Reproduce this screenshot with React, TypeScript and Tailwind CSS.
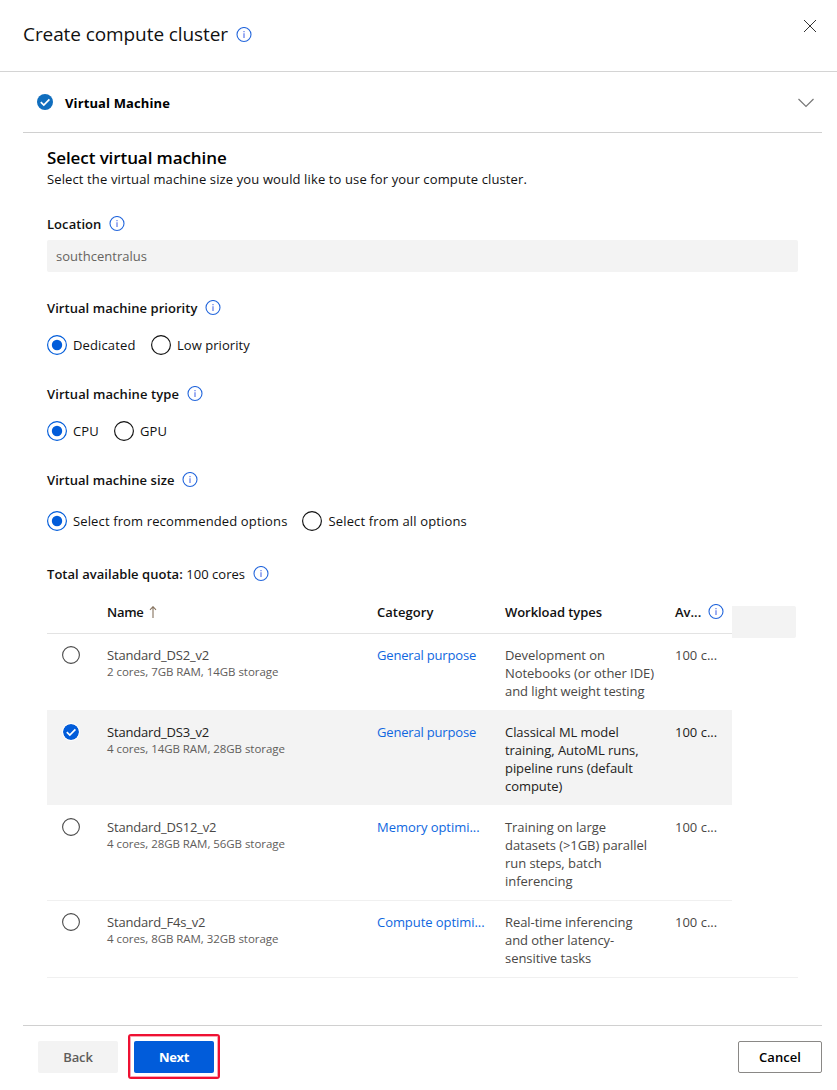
import type { ReactNode } from 'react';

function InfoIcon({ className = '' }: { className?: string }) {
  return (
    <svg viewBox="0 0 16 16" className={`h-4 w-4 shrink-0 ${className}`} fill="none">
      <circle cx="8" cy="7.5" r="7" stroke="#2467dc" strokeWidth="1.1" />
      <path d="M8 6.3V11" stroke="#5c78ea" strokeWidth="1.2" />
      <path d="M8 4V5.2" stroke="#5c78ea" strokeWidth="1.2" />
    </svg>
  );
}

function CheckCircle({ color, className }: { color: string; className: string }) {
  return (
    <svg viewBox="0 0 16 16" className={className} fill="none">
      <circle cx="8" cy="8" r="8" fill={color} />
      <path d="M3.8 8.1L6.8 11L12.4 5.3" stroke="#fff" strokeWidth="1.7" />
    </svg>
  );
}

function Radio({ checked, label, tracking }: { checked?: boolean; label: string; tracking: string }) {
  return (
    <label className="flex h-5 items-center">
      <svg viewBox="0 0 20 20" className="mr-1.5 h-5 w-5 shrink-0" fill="none">
        <circle cx="10" cy="10" r="9.4" stroke={checked ? '#015cda' : '#111111'} strokeWidth="1.15" />
        {checked && <circle cx="10" cy="10" r="5.2" fill="#015cda" />}
      </svg>
      <span className={`pt-0.5 ${tracking}`}>{label}</span>
    </label>
  );
}

function Label({ children, className }: { children: ReactNode; className: string }) {
  return (
    <div className={`flex h-5 items-center gap-[7.6px] whitespace-nowrap ${className}`}>
      <span className="pt-0.5">{children}</span>
      <InfoIcon />
    </div>
  );
}

type Vm = {
  name: string;
  spec: string;
  category: string;
  categoryTracking: string;
  lines: string[];
  selected?: boolean;
};

const machines: Vm[] = [
  {
    name: 'Standard_DS2_v2',
    spec: '2 cores, 7GB RAM, 14GB storage',
    category: 'General purpose',
    categoryTracking: 'tracking-[-0.18px]',
    lines: ['Development on', 'Notebooks (or other IDE)', 'and light weight testing'],
  },
  {
    name: 'Standard_DS3_v2',
    spec: '4 cores, 14GB RAM, 28GB storage',
    category: 'General purpose',
    categoryTracking: 'tracking-[-0.18px]',
    lines: ['Classical ML model', 'training, AutoML runs,', 'pipeline runs (default', 'compute)'],
    selected: true,
  },
  {
    name: 'Standard_DS12_v2',
    spec: '4 cores, 28GB RAM, 56GB storage',
    category: 'Memory optimi...',
    categoryTracking: 'tracking-[-0.05px]',
    lines: ['Training on large', 'datasets (>1GB) parallel', 'run steps, batch', 'inferencing'],
  },
  {
    name: 'Standard_F4s_v2',
    spec: '4 cores, 8GB RAM, 32GB storage',
    category: 'Compute optimi...',
    categoryTracking: 'tracking-[-0.06px]',
    lines: ['Real-time inferencing', 'and other latency-', 'sensitive tasks'],
  },
];

const borders = ['border-[#e3e3e3]', 'border-[#f3f3f3]', 'border-white', 'border-[#f0f0f0]'];

const columns = 'grid grid-cols-[60px_270px_128px_170px_57px] whitespace-nowrap';

function MachineRow({ vm, border }: { vm: Vm; border: string }) {
  const tone = vm.selected ? 'bg-[#f3f3f3] text-[#222120]' : 'text-[#4a4846]';
  return (
    <div className={`${columns} border-t pb-2.5 pt-3 leading-[18px] ${tone} ${border}`}>
      <div className="pl-[15px]">
        {vm.selected ? (
          <CheckCircle color="#015cda" className="ml-px mt-px h-4 w-4 rounded-full ring-1 ring-white" />
        ) : (
          <svg viewBox="0 0 18 18" className="h-[18px] w-[18px]" fill="none">
            <circle cx="9" cy="9" r="8.4" stroke="#4a4a4a" strokeWidth="1.1" />
          </svg>
        )}
      </div>
      <div>
        <div className="tracking-[-0.18px]">{vm.name}</div>
        <div className="text-[11.5px] leading-4 tracking-[-0.05px] text-[#5f5d5b]">{vm.spec}</div>
      </div>
      <div className={`text-[#0f67e0] ${vm.categoryTracking}`}>{vm.category}</div>
      <div className="tracking-[-0.06px]">
        {vm.lines.map((text) => (
          <div key={text}>{text}</div>
        ))}
      </div>
      <div>100 c...</div>
    </div>
  );
}

export default function App() {
  return (
    <div className="flex h-[1090px] w-[837px] flex-col overflow-hidden bg-white font-['Open_Sans','Noto_Sans',sans-serif] text-[13px] text-[#111111]">
      <header className="flex h-[72px] shrink-0 justify-between border-b border-[#d4d4d4] pl-[23px] pr-[21px]">
        <div className="flex h-[68px] items-center gap-[7.6px]">
          <h1 className="text-[19px] tracking-[-0.087px]">Create compute cluster</h1>
          <InfoIcon className="mt-px" />
        </div>
        <svg viewBox="0 0 12 12" className="mt-5 h-3 w-3" fill="none">
          <path d="M0 0L12 12M12 0L0 12" stroke="#333" strokeWidth="1" />
        </svg>
      </header>

      <section className="ml-[23px] mr-[15px] flex h-[61px] shrink-0 items-center border-b border-[#d0d0d0] pl-3.5 pr-2">
        <CheckCircle color="#106ebe" className="h-4 w-4" />
        <h2 className="ml-3 flex-1 pt-[3px] font-bold tracking-[0.118px] text-black">Virtual Machine</h2>
        <svg viewBox="0 0 16 10" className="mt-px h-2.5 w-4" fill="none">
          <path d="M0.5 1L8 8.5L15.5 1" stroke="#777" strokeWidth="1.2" />
        </svg>
      </section>

      <main className="ml-[47px] mr-[39px] flex-1">
        <h3 className="mt-[13px] text-[17px] font-semibold leading-6 tracking-[-0.09px] text-black">Select virtual machine</h3>
        <p className="leading-[18px] tracking-[0.124px]">
          Select the virtual machine size you would like to use for your compute cluster.
        </p>

        <Label className="mt-[26px] font-semibold tracking-[0.06px]">Location</Label>
        <div className="mt-1.5 flex h-8 items-center rounded-[2px] bg-[#f3f3f3] pl-[9px] pt-0.5 tracking-[0.02px] text-[#66635f]">
          southcentralus
        </div>

        <Label className="mt-[26px] font-semibold tracking-[0.05px]">Virtual machine priority</Label>
        <div className="mt-[17px] flex gap-[15.5px]">
          <Radio checked label="Dedicated" tracking="tracking-[0.13px]" />
          <Radio label="Low priority" tracking="tracking-[0.05px]" />
        </div>

        <Label className="mt-[29px] font-semibold tracking-[0.08px]">Virtual machine type</Label>
        <div className="mt-[17px] flex gap-[15px]">
          <Radio checked label="CPU" tracking="tracking-[0.16px]" />
          <Radio label="GPU" tracking="tracking-[0.08px]" />
        </div>

        <Label className="mt-[29px] font-semibold tracking-[0.057px]">Virtual machine size</Label>
        <div className="mt-[21px] flex gap-[15px]">
          <Radio checked label="Select from recommended options" tracking="tracking-[0.13px]" />
          <Radio label="Select from all options" tracking="tracking-[0.15px]" />
        </div>

        <Label className="mt-[33px]">
          <span className="tracking-[0.04px]">
            <span className="font-semibold">Total available quota:</span> 100 cores
          </span>
        </Label>

        <div className="mt-[7px] flex items-start">
          <div className="w-[685px]">
            <div className={`${columns} h-[42px] items-center pt-0.5 font-semibold`}>
              <span />
              <span className="flex items-center">
                <span className="tracking-[-0.28px]">Name</span>
                <svg viewBox="0 0 8 12" className="-mt-0.5 ml-[5px] h-3 w-2" fill="none">
                  <path d="M4 0.7V12M1 3.8L4 0.7L7 3.8" stroke="#86735f" strokeWidth="1.1" />
                </svg>
              </span>
              <span className="tracking-[0.047px]">Category</span>
              <span className="tracking-[-0.063px]">Workload types</span>
              <span className="flex items-center justify-between pr-2">
                Av...
                <InfoIcon className="-mt-0.5" />
              </span>
            </div>
            {machines.map((vm, i) => (
              <MachineRow key={vm.name} vm={vm} border={borders[i]} />
            ))}
          </div>
          <div className="mt-[15px] h-8 w-16 rounded-r-[2px] bg-[#f3f3f3]" />
        </div>
        <div className="border-t border-[#f0f0f0]" />
      </main>

      <footer className="ml-[23px] mr-[15px] flex h-[65px] shrink-0 items-start border-t border-[#d0d0d0] pl-[15px] font-semibold">
        <button className="mt-[15px] h-8 w-20 rounded-[2px] bg-[#f3f3f3] pt-0.5 tracking-[-0.12px] text-[#5f5d5b]">Back</button>
        <div className="ml-2.5 mt-2 flex h-[45px] w-[92px] items-center justify-center rounded-[3px] border-2 border-[#ee1133] ring-1 ring-inset ring-[#f9a8b4]">
          <button className="h-8 w-20 rounded-[2px] bg-[#015cda] pt-0.5 font-bold tracking-[-0.35px] text-white">Next</button>
        </div>
        <button className="ml-auto mt-[15px] h-8 w-[84px] rounded-[2px] border border-[#8a8886] pt-0.5 tracking-[0.06px] text-black">Cancel</button>
      </footer>
    </div>
  );
}
